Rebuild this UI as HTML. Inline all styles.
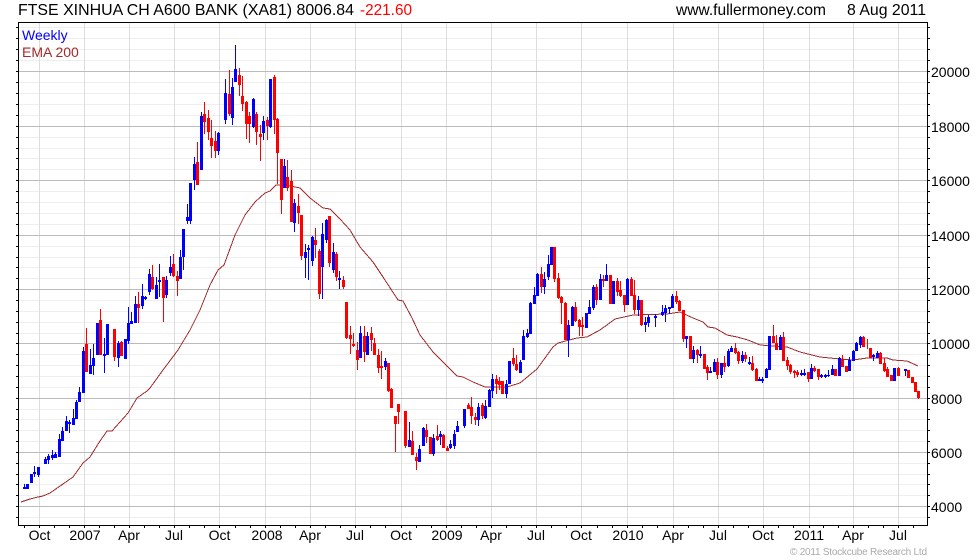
<!DOCTYPE html>
<html><head><meta charset="utf-8"><title>FTSE XINHUA CH A600 BANK</title>
<style>
html,body{margin:0;padding:0;background:#fff}
svg{display:block}
text{font-family:"Liberation Sans",Arial,sans-serif}
.c{shape-rendering:crispEdges;fill:none}
</style></head><body>
<svg width="980" height="560" viewBox="0 0 980 560" xmlns="http://www.w3.org/2000/svg">
<rect width="980" height="560" fill="#fff"/>
<!-- minor grid -->
<path class="c" stroke="#eeeeee" stroke-width="1" d="M18 27.5H927M18 38.5H927M18 49.5H927M18 60.5H927M18 82.5H927M18 93.5H927M18 104.5H927M18 115.5H927M18 137.5H927M18 148.5H927M18 158.5H927M18 169.5H927M18 191.5H927M18 202.5H927M18 213.5H927M18 224.5H927M18 246.5H927M18 257.5H927M18 267.5H927M18 278.5H927M18 300.5H927M18 311.5H927M18 322.5H927M18 333.5H927M18 354.5H927M18 365.5H927M18 376.5H927M18 387.5H927M18 409.5H927M18 419.5H927M18 430.5H927M18 441.5H927M18 463.5H927M18 474.5H927M18 484.5H927M18 495.5H927M18 517.5H927"/>
<!-- vertical grid -->
<path class="c" stroke="#dddddd" stroke-width="1" d="M39.5 22V525M84.5 22V525M129.5 22V525M174.5 22V525M219.5 22V525M265.5 22V525M310.5 22V525M355.5 22V525M401.5 22V525M446.5 22V525M491.5 22V525M536.5 22V525M581.5 22V525M627.5 22V525M673.5 22V525M718.5 22V525M763.5 22V525M809.5 22V525M853.5 22V525M898.5 22V525"/>
<!-- major grid -->
<path class="c" stroke="#bbbbbb" stroke-width="1" d="M18 71.5H927M18 126.5H927M18 180.5H927M18 235.5H927M18 289.5H927M18 343.5H927M18 398.5H927M18 452.5H927M18 506.5H927"/>
<!-- axes -->
<path class="c" stroke="#000" stroke-width="1" d="M18.5 22V526M927.5 22V526M18 22.5H928M18 525.5H928"/>
<!-- y ticks -->
<path class="c" stroke="#000" stroke-width="1" d="M16 27.5H18M16 38.5H18M16 49.5H18M16 60.5H18M16 71.5H18M16 82.5H18M16 93.5H18M16 104.5H18M16 115.5H18M16 126.5H18M16 137.5H18M16 148.5H18M16 158.5H18M16 169.5H18M16 180.5H18M16 191.5H18M16 202.5H18M16 213.5H18M16 224.5H18M16 235.5H18M16 246.5H18M16 257.5H18M16 267.5H18M16 278.5H18M16 289.5H18M16 300.5H18M16 311.5H18M16 322.5H18M16 333.5H18M16 343.5H18M16 354.5H18M16 365.5H18M16 376.5H18M16 387.5H18M16 398.5H18M16 409.5H18M16 419.5H18M16 430.5H18M16 441.5H18M16 452.5H18M16 463.5H18M16 474.5H18M16 484.5H18M16 495.5H18M16 506.5H18M16 517.5H18"/>
<path class="c" stroke="#000" stroke-width="1" d="M928 27.5H930M928 38.5H930M928 49.5H930M928 60.5H930M928 71.5H930M928 82.5H930M928 93.5H930M928 104.5H930M928 115.5H930M928 126.5H930M928 137.5H930M928 148.5H930M928 158.5H930M928 169.5H930M928 180.5H930M928 191.5H930M928 202.5H930M928 213.5H930M928 224.5H930M928 235.5H930M928 246.5H930M928 257.5H930M928 267.5H930M928 278.5H930M928 289.5H930M928 300.5H930M928 311.5H930M928 322.5H930M928 333.5H930M928 343.5H930M928 354.5H930M928 365.5H930M928 376.5H930M928 387.5H930M928 398.5H930M928 409.5H930M928 419.5H930M928 430.5H930M928 441.5H930M928 452.5H930M928 463.5H930M928 474.5H930M928 484.5H930M928 495.5H930M928 506.5H930M928 517.5H930"/>
<!-- x ticks -->
<path class="c" stroke="#000" stroke-width="1" d="M24.5 526V528M39.5 526V528M54.5 526V528M69.5 526V528M84.5 526V528M99.5 526V528M114.5 526V528M129.5 526V528M144.5 526V528M159.5 526V528M174.5 526V528M189.5 526V528M204.5 526V528M219.5 526V528M235.5 526V528M250.5 526V528M265.5 526V528M280.5 526V528M295.5 526V528M310.5 526V528M325.5 526V528M340.5 526V528M355.5 526V528M370.5 526V528M385.5 526V528M401.5 526V528M416.5 526V528M431.5 526V528M446.5 526V528M461.5 526V528M476.5 526V528M491.5 526V528M506.5 526V528M521.5 526V528M536.5 526V528M551.5 526V528M566.5 526V528M581.5 526V528M597.5 526V528M612.5 526V528M627.5 526V528M642.5 526V528M657.5 526V528M673.5 526V528M688.5 526V528M703.5 526V528M718.5 526V528M733.5 526V528M748.5 526V528M763.5 526V528M778.5 526V528M793.5 526V528M809.5 526V528M823.5 526V528M838.5 526V528M853.5 526V528M868.5 526V528M883.5 526V528M898.5 526V528M913.5 526V528"/>
<!-- EMA -->
<polyline class="c" stroke="#a52a2a" stroke-width="1" points="21,502 30,499 38,497 43,496 50,493 63,484 73,477 83,463 90,457 100,441 107,431 112,431 128,413 137,398 147,391 150,388 163,370 178,350 190,330 200,310 210,285 218,270 224,265 235,235 245,215 255,202 265,193 270,191 276,185 286,185 300,188 310,198 323,208 330,209 340,219 350,230 360,247 373,262 383,277 398,300 403,301 412,318 420,335 433,352 447,366 457,376 463,377 473,382 485,387 507,387 520,383 537,369 553,347 558,343 577,338 587,337 600,330 615,319 633,315 667,314 680,312 693,318 703,322 708,327 715,328 727,335 737,337 748,340 760,345 773,346 787,347 800,352 820,357 830,358 840,359 853,360 867,358 887,358 893,360 907,361 918,366"/>
<!-- blue wicks -->
<path class="c" stroke="#0000ff" stroke-width="1" d="M24.5 484V489M34.5 466V477M38.5 467V477M45.5 457V464M48.5 454V464M52.5 450V460M55.5 452V458M59.5 434V457M62.5 427V441M66.5 416V431M69.5 420V433M73.5 409V425M76.5 400V419M79.5 387V402M83.5 347V393M90.5 349V374M93.5 344V375M104.5 338V373M118.5 341V367M128.5 307V344M131.5 312V324M135.5 296V323M142.5 284V309M145.5 296V300M149.5 269V295M156.5 277V299M159.5 264V297M166.5 276V298M170.5 256V276M180.5 250V279M183.5 229V270M187.5 204V224M190.5 183V224M194.5 157V190M201.5 112V170M218.5 132V155M225.5 79V124M232.5 78V125M235.5 45V82M253.5 98V128M263.5 116V140M270.5 79V128M284.5 159V188M294.5 199V232M305.5 244V278M308.5 245V280M312.5 236V266M322.5 223V299M326.5 219V243M333.5 243V273M339.5 271V289M360.5 326V358M367.5 332V355M385.5 358V370M409.5 422V447M419.5 445V462M423.5 427V446M433.5 434V456M440.5 431V445M450.5 440V449M454.5 430V449M457.5 421V432M464.5 409V428M478.5 403V426M485.5 400V419M489.5 389V407M492.5 374V398M506.5 380V398M520.5 360V373M523.5 330V360M527.5 329V338M530.5 302V334M534.5 287V304M537.5 273V296M544.5 272V294M548.5 255V280M568.5 320V357M572.5 306V326M589.5 300V314M593.5 285V310M600.5 274V300M606.5 264V281M627.5 278V305M638.5 296V316M645.5 317V332M648.5 315V327M655.5 314V327M662.5 305V316M665.5 305V322M669.5 307V314M672.5 294V308M686.5 336V348M693.5 346V363M700.5 346V358M710.5 367V373M714.5 359V372M721.5 363V378M728.5 349V367M731.5 346V352M742.5 351V363M749.5 357V365M759.5 377V381M762.5 377V383M766.5 368V378M780.5 335V350M801.5 370V376M804.5 369V376M811.5 364V379M821.5 374V378M825.5 374V378M828.5 370V377M832.5 365V375M839.5 357V376M849.5 357V371M853.5 350V361M856.5 342V351M860.5 336V348M873.5 354V361M877.5 351V358M905.5 369V376"/>
<!-- blue bodies -->
<path class="c" stroke="#0000ff" stroke-width="3" d="M24.5 487V489M27.5 484V489M31.5 474V483M34.5 472V474M38.5 467V475M45.5 459V464M48.5 456V460M52.5 455V458M55.5 454V458M59.5 439V457M62.5 431V441M66.5 421V431M69.5 422V424M73.5 418V425M76.5 402V419M79.5 392V402M83.5 351V393M90.5 365V374M93.5 358V366M97.5 323V355M104.5 354V356M107.5 324V355M118.5 343V358M125.5 339V359M128.5 323V341M131.5 321V324M135.5 304V323M142.5 296V306M145.5 297V299M149.5 274V292M156.5 285V299M159.5 280V282M166.5 280V295M170.5 267V273M180.5 257V279M183.5 229V257M187.5 217V221M190.5 183V221M194.5 164V180M201.5 116V170M218.5 133V151M225.5 93V120M232.5 87V118M235.5 69V82M253.5 99V127M263.5 121V133M270.5 79V127M284.5 166V188M294.5 203V223M305.5 252V258M308.5 248V250M312.5 237V261M322.5 234V267M326.5 220V240M333.5 252V270M339.5 278V280M360.5 333V358M367.5 336V355M385.5 361V367M409.5 440V447M419.5 449V462M423.5 428V446M433.5 438V454M440.5 434V437M450.5 444V448M454.5 434V446M457.5 426V432M464.5 409V426M478.5 407V420M485.5 406V418M489.5 390V407M492.5 379V391M506.5 384V394M509.5 361V384M520.5 362V373M523.5 336V360M527.5 333V337M530.5 303V334M534.5 295V304M537.5 274V296M544.5 279V287M548.5 264V277M551.5 247V265M568.5 325V340M572.5 307V326M586.5 313V328M589.5 307V314M593.5 287V308M600.5 279V300M606.5 275V281M613.5 281V304M627.5 279V305M638.5 300V310M645.5 322V325M648.5 317V323M655.5 316V318M662.5 312V315M665.5 308V313M669.5 307V309M672.5 296V308M686.5 336V339M693.5 350V359M700.5 354V356M710.5 371V373M714.5 362V372M721.5 363V375M728.5 351V366M731.5 348V352M742.5 355V361M749.5 362V364M759.5 379V381M762.5 379V381M766.5 369V378M769.5 336V370M780.5 337V350M801.5 373V375M804.5 373V375M811.5 368V379M821.5 375V377M825.5 375V377M828.5 375V376M832.5 369V375M839.5 358V376M849.5 360V371M853.5 351V361M856.5 343V351M860.5 337V345M873.5 355V357M877.5 353V358M894.5 368V381M905.5 369V371"/>
<!-- red wicks -->
<path class="c" stroke="#ff0000" stroke-width="1" d="M86.5 328V372M100.5 309V355M114.5 329V361M121.5 341V356M138.5 292V323M152.5 265V290M163.5 277V322M173.5 254V277M177.5 271V296M197.5 142V185M204.5 102V134M208.5 110V140M211.5 120V158M215.5 131V158M229.5 70V116M239.5 68V96M242.5 76V111M246.5 101V139M249.5 112V143M256.5 112V145M260.5 125V161M267.5 117V140M274.5 75V134M277.5 118V184M281.5 159V214M287.5 160V191M291.5 170V222M298.5 194V224M301.5 215V260M315.5 228V258M319.5 249V299M329.5 216V267M336.5 252V281M343.5 276V289M346.5 302V339M350.5 326V354M353.5 333V347M357.5 342V370M364.5 326V362M371.5 327V351M374.5 338V355M378.5 349V373M381.5 351V379M388.5 363V392M391.5 388V408M395.5 416V452M398.5 404V424M405.5 411V448M412.5 431V455M416.5 453V470M426.5 424V443M437.5 425V441M443.5 434V448M447.5 446V451M468.5 403V409M471.5 397V424M475.5 413V425M482.5 403V419M496.5 375V394M499.5 377V390M513.5 348V366M516.5 355V371M541.5 267V293M554.5 247V282M558.5 273V299M561.5 296V324M565.5 302V340M575.5 302V322M579.5 319V336M582.5 317V336M596.5 284V305M603.5 275V287M617.5 278V296M620.5 281V297M624.5 295V312M631.5 277V296M634.5 280V314M641.5 300V326M676.5 291V304M679.5 300V311M683.5 310V342M697.5 349V363M707.5 365V380M717.5 358V379M724.5 356V372M735.5 343V354M738.5 351V364M745.5 352V362M752.5 356V371M756.5 368V381M773.5 325V343M776.5 335V350M783.5 332V361M787.5 357V370M790.5 364V374M794.5 370V378M797.5 370V377M808.5 372V382M814.5 366V372M818.5 369V380M842.5 355V367M863.5 336V347M867.5 339V349M880.5 352V364M884.5 358V372M887.5 367V377M898.5 367V376M918.5 391V399"/>
<!-- red bodies -->
<path class="c" stroke="#ff0000" stroke-width="3" d="M86.5 344V372M100.5 320V355M114.5 329V357M121.5 342V356M138.5 304V308M152.5 277V289M163.5 277V298M173.5 264V276M177.5 276V281M197.5 162V185M204.5 114V122M208.5 118V132M211.5 138V146M215.5 141V151M229.5 94V114M239.5 75V85M242.5 96V104M246.5 102V124M249.5 116V124M256.5 114V132M260.5 134V137M267.5 120V126M274.5 77V120M277.5 119V153M281.5 159V200M287.5 177V188M291.5 181V222M298.5 206V213M301.5 215V256M315.5 240V245M319.5 251V294M329.5 216V263M336.5 254V277M343.5 280V287M346.5 302V338M350.5 335V339M353.5 344V346M357.5 350V360M364.5 336V352M371.5 333V340M374.5 343V355M378.5 355V368M381.5 366V368M388.5 363V391M391.5 389V408M395.5 416V424M398.5 404V412M405.5 411V446M412.5 441V455M416.5 457V461M426.5 430V437M430.5 437V454M437.5 436V440M443.5 435V448M447.5 448V451M468.5 405V409M471.5 407V416M475.5 417V420M482.5 405V416M496.5 379V384M499.5 381V385M502.5 381V394M513.5 358V364M516.5 364V370M541.5 274V287M554.5 247V279M558.5 278V298M561.5 297V303M565.5 303V340M575.5 307V321M579.5 320V327M582.5 325V327M596.5 287V300M603.5 279V281M610.5 275V304M617.5 281V292M620.5 290V296M624.5 295V305M631.5 279V296M634.5 295V310M641.5 300V325M676.5 296V302M679.5 301V311M683.5 310V339M690.5 336V359M697.5 350V355M704.5 354V369M707.5 367V373M717.5 362V375M724.5 363V367M735.5 348V353M738.5 352V361M745.5 355V359M752.5 363V370M756.5 369V381M773.5 336V343M776.5 343V350M783.5 337V361M787.5 360V366M790.5 365V372M794.5 371V373M797.5 372V375M808.5 372V379M814.5 368V371M818.5 369V377M835.5 369V376M842.5 359V367M846.5 366V372M863.5 337V347M870.5 348V358M880.5 353V364M884.5 363V371M887.5 369V377M891.5 375V381M898.5 368V376M908.5 370V378M912.5 377V383M915.5 382V392M918.5 391V398"/>
<!-- title -->
<text x="18" y="15" font-size="16" fill="#000" textLength="336" lengthAdjust="spacingAndGlyphs">FTSE XINHUA CH A600 BANK (XA81) 8006.84</text>
<text x="360" y="15" font-size="16" fill="#ff0000" textLength="52" lengthAdjust="spacingAndGlyphs">-221.60</text>
<text x="676" y="15" font-size="16" fill="#000" textLength="150" lengthAdjust="spacingAndGlyphs">www.fullermoney.com</text>
<text x="847" y="15" font-size="16" fill="#000" textLength="79" lengthAdjust="spacingAndGlyphs">8 Aug 2011</text>
<text x="22" y="40" font-size="14" fill="#0000ff">Weekly</text>
<text x="22" y="57" font-size="14" fill="#a52a2a">EMA 200</text>
<!-- y labels -->
<g font-size="14" fill="#000">
<text x="931" y="77">20000</text><text x="931" y="132">18000</text><text x="931" y="186">16000</text><text x="931" y="241">14000</text><text x="931" y="295">12000</text><text x="931" y="349">10000</text><text x="931" y="404">8000</text><text x="931" y="458">6000</text><text x="931" y="512">4000</text>
</g>
<!-- x labels -->
<g font-size="14" fill="#000" text-anchor="middle">
<text x="39.5" y="540">Oct</text><text x="85" y="540">2007</text><text x="129" y="540">Apr</text><text x="174" y="540">Jul</text><text x="219.5" y="540">Oct</text><text x="267" y="540">2008</text><text x="310" y="540">Apr</text><text x="355" y="540">Jul</text><text x="401" y="540">Oct</text><text x="447" y="540">2009</text><text x="491" y="540">Apr</text><text x="536" y="540">Jul</text><text x="581" y="540">Oct</text><text x="628" y="540">2010</text><text x="673" y="540">Apr</text><text x="718" y="540">Jul</text><text x="763" y="540">Oct</text><text x="809" y="540">2011</text><text x="853" y="540">Apr</text><text x="898" y="540">Jul</text>
</g>
<text x="790" y="555" font-size="10" fill="#aaaaaa" textLength="137" lengthAdjust="spacing">© 2011 Stockcube Research Ltd</text>
</svg>
</body></html>
